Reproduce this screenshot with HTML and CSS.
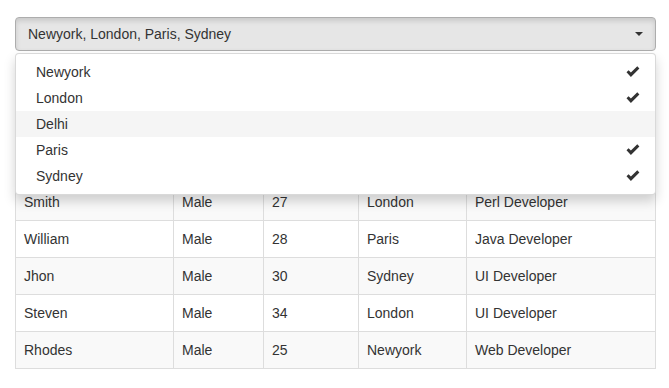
FILE: index.html
```html
<!DOCTYPE html>
<html lang="en">
<head>
    <meta charset="UTF-8">
    <title>Employees - Location filter</title>
    <link rel="stylesheet" href="styles.css">
</head>
<body>

<div class="container">
    <div class="select-wrap">
        <button class="select-btn" type="button">
            <span class="select-text">Newyork, London, Paris, Sydney</span>
            <span class="caret"></span>
        </button>
        <ul class="select-menu">
            <li class="selected"><span>Newyork</span><svg class="check" viewBox="0 0 14 12"><path d="M0.5 6.2 L2.6 4.2 L4.9 6.6 L11.3 0.3 L13.4 2.4 L4.9 10.9 Z"/></svg></li>
            <li class="selected"><span>London</span><svg class="check" viewBox="0 0 14 12"><path d="M0.5 6.2 L2.6 4.2 L4.9 6.6 L11.3 0.3 L13.4 2.4 L4.9 10.9 Z"/></svg></li>
            <li class="hover"><span>Delhi</span></li>
            <li class="selected"><span>Paris</span><svg class="check" viewBox="0 0 14 12"><path d="M0.5 6.2 L2.6 4.2 L4.9 6.6 L11.3 0.3 L13.4 2.4 L4.9 10.9 Z"/></svg></li>
            <li class="selected"><span>Sydney</span><svg class="check" viewBox="0 0 14 12"><path d="M0.5 6.2 L2.6 4.2 L4.9 6.6 L11.3 0.3 L13.4 2.4 L4.9 10.9 Z"/></svg></li>
        </ul>
    </div>

    <table class="emp-table">
        <colgroup>
            <col class="c-name">
            <col class="c-gender">
            <col class="c-age">
            <col class="c-loc">
            <col class="c-desig">
        </colgroup>
        <tbody>
            <tr><td>Smith</td><td>Male</td><td>27</td><td>London</td><td>Perl Developer</td></tr>
            <tr><td>William</td><td>Male</td><td>28</td><td>Paris</td><td>Java Developer</td></tr>
            <tr><td>Jhon</td><td>Male</td><td>30</td><td>Sydney</td><td>UI Developer</td></tr>
            <tr><td>Steven</td><td>Male</td><td>34</td><td>London</td><td>UI Developer</td></tr>
            <tr><td>Rhodes</td><td>Male</td><td>25</td><td>Newyork</td><td>Web Developer</td></tr>
        </tbody>
    </table>
</div>

</body>
</html>
```

FILE: styles.css
```css
        body {
            font-family: "Liberation Sans", Arial, sans-serif;
            font-size: 14px;
            line-height: 20px;
            margin: 0;
            padding: 0;
            background: #fff;
            color: #333;
        }
        .container {
            padding: 17px 13px 0 15px;
        }
        .select-wrap {
            position: relative;
            z-index: 10;
        }
        .select-btn {
            display: flex;
            align-items: center;
            justify-content: space-between;
            width: 100%;
            height: 34px;
            padding: 6px 12px;
            font: inherit;
            color: #333;
            text-align: left;
            background: #e6e6e6;
            border: 1px solid #adadad;
            border-radius: 4px;
            box-shadow: inset 0 3px 5px rgba(0, 0, 0, .125);
        }
        .caret {
            width: 0;
            height: 0;
            border-top: 4px solid #333;
            border-left: 4px solid transparent;
            border-right: 4px solid transparent;
        }
        .select-menu {
            position: absolute;
            top: 100%;
            left: 0;
            right: 0;
            list-style: none;
            margin: 2px 0 0;
            padding: 5px 0;
            background: #fff;
            border: 1px solid rgba(0, 0, 0, .15);
            border-radius: 4px;
            box-shadow: 0 6px 12px rgba(0, 0, 0, .175);
        }
        .select-menu li {
            display: flex;
            align-items: center;
            justify-content: space-between;
            padding: 3px 15px 3px 20px;
            height: 20px;
        }
        .select-menu li.hover {
            background: #f5f5f5;
        }
        .check {
            width: 14px;
            height: 12px;
            fill: #333;
        }
        .emp-table {
            width: 100%;
            margin-top: 132px;
            border-collapse: collapse;
            table-layout: fixed;
            border: 1px solid #ddd;
        }
        .c-name { width: 158px; }
        .c-gender { width: 90px; }
        .c-age { width: 95px; }
        .c-loc { width: 108px; }
        .emp-table td {
            padding: 8px;
            text-align: left;
            border: 1px solid #ddd;
        }
        .emp-table tbody tr:nth-of-type(odd) {
            background: #f9f9f9;
        }
```
